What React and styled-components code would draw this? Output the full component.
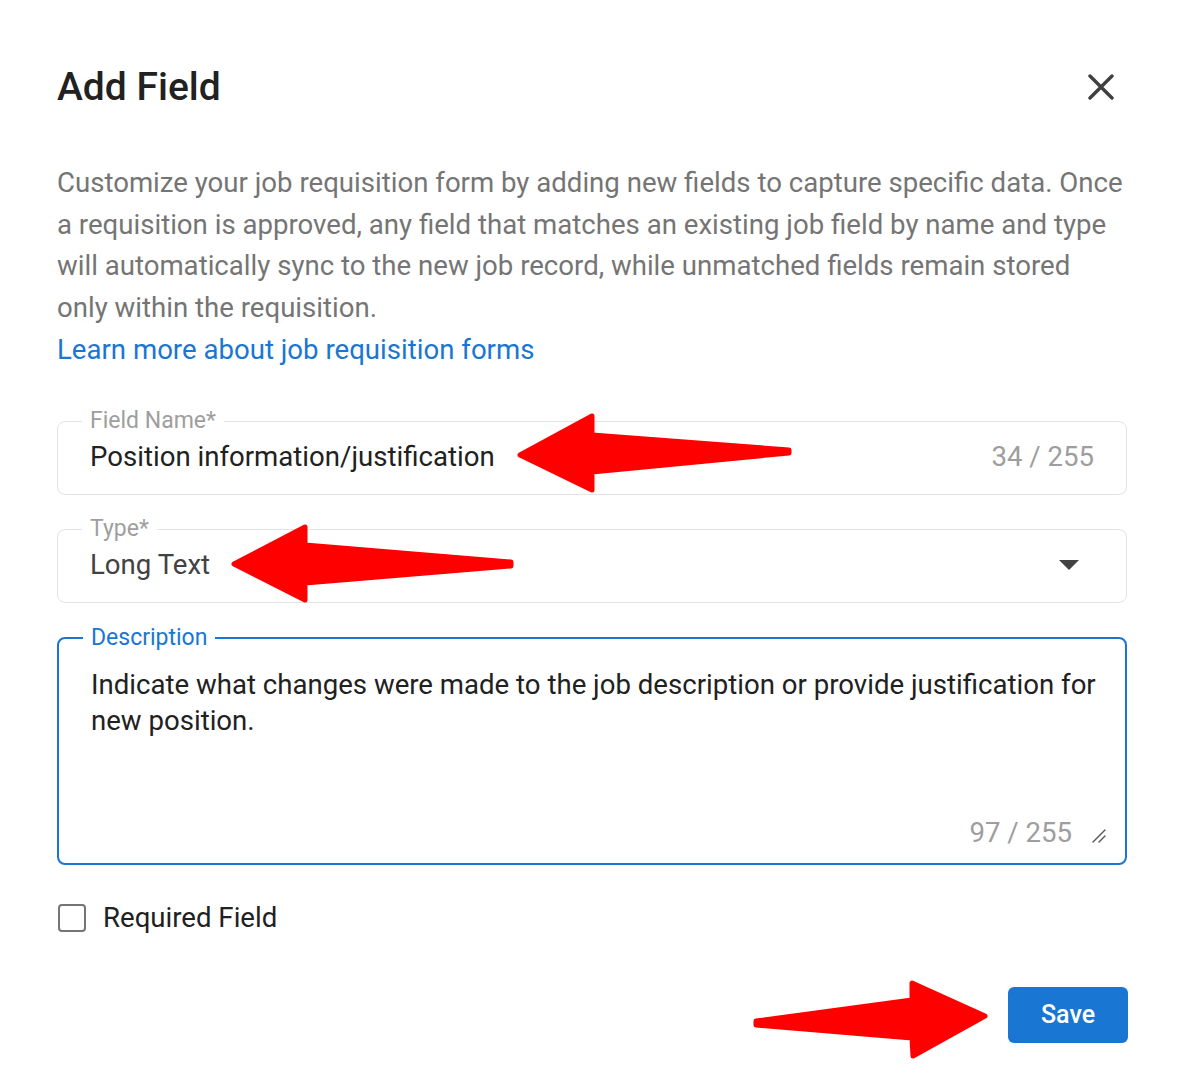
import React from 'react';
import styled, { createGlobalStyle } from 'styled-components';

function App() {
  return (
    <>
      <GlobalStyle />
      <Dialog>
        <Header>
          <Title>Add Field</Title>
          <CloseButton aria-label="Close">
            <svg width="26" height="26" viewBox="0 0 26 26">
              <path d="M2 2 L24 24 M24 2 L2 24" stroke="#3f3f3f" strokeWidth="3.4" strokeLinecap="round" />
            </svg>
          </CloseButton>
        </Header>

        <Intro>
          Customize your job requisition form by adding new fields to capture specific data. Once
          a requisition is approved, any field that matches an existing job field by name and type
          will automatically sync to the new job record, while unmatched fields remain stored
          only within the requisition.
          <IntroLink href="#">Learn more about job requisition forms</IntroLink>
        </Intro>

        <Form>
          <Outlined height={74}>
            <Label>Field Name*</Label>
            <Value>Position information/justification</Value>
            <Counter>34 / 255</Counter>
          </Outlined>

          <Outlined height={74}>
            <Label>Type*</Label>
            <Value muted>Long Text</Value>
            <Caret />
          </Outlined>

          <Outlined height={228} focused>
            <Label focused>Description</Label>
            <AreaText>
              Indicate what changes were made to the job description or provide justification for
              new position.
            </AreaText>
            <AreaFooter>
              <Counter>97 / 255</Counter>
              <svg width="14" height="14" viewBox="0 0 14 14">
                <path d="M1 13 L13 1 M7 13 L13 7" stroke="#555" strokeWidth="1.4" strokeLinecap="round" />
              </svg>
            </AreaFooter>
          </Outlined>
        </Form>

        <CheckRow>
          <Box />
          Required Field
        </CheckRow>

        <Footer>
          <SaveButton>Save</SaveButton>
        </Footer>
      </Dialog>

      {/* callout arrows */}
      <Callouts width="1186" height="1080" viewBox="0 0 1186 1080">
        <g fill="#ff0000" stroke="#ff0000" strokeWidth="5" strokeLinejoin="round">
          <polygon points="520,455 592,416 592,435 789,450 789,453 592,472 592,490" />
          <polygon points="234,564 305,527 305,545 511,562 511,566 305,583 305,600" />
          <polygon points="985,1016 912,983 912,1000 756,1021 756,1025 912,1038 913,1056" />
        </g>
      </Callouts>
    </>
  );
}

const GlobalStyle = createGlobalStyle`
  html, body {
    margin: 0;
    padding: 0;
    background: #ffffff;
  }
  body {
    font-family: Roboto, "Liberation Sans", sans-serif;
    color: #212121;
  }
`;

const Dialog = styled.div`
  width: 1186px;
  height: 1080px;
  box-sizing: border-box;
  padding: 65px 59px 0 57px;
  display: flex;
  flex-direction: column;
`;

const Header = styled.div`
  display: flex;
  align-items: center;
  justify-content: space-between;
  height: 44px;
`;

const Title = styled.h1`
  margin: 0;
  font-size: 39px;
  line-height: 44px;
  font-weight: 500;
  color: #212121;
`;

const CloseButton = styled.button`
  border: none;
  background: none;
  padding: 0;
  margin-right: 13px;
  display: flex;
  cursor: pointer;
`;

const Intro = styled.p`
  margin: 53px 0 0;
  font-size: 27.6px;
  line-height: 41.7px;
  color: #757575;
`;

const IntroLink = styled.a`
  display: block;
  color: #1976d2;
  text-decoration: none;
`;

const Form = styled.div`
  margin-top: 50px;
  display: flex;
  flex-direction: column;
  gap: 34px;
`;

const Outlined = styled.div`
  position: relative;
  height: ${(p) => p.height}px;
  box-sizing: border-box;
  border: ${(p) => (p.focused ? '2px solid #1976d2' : '1.5px solid #e3e3e3')};
  border-radius: 8px;
  display: flex;
  align-items: ${(p) => (p.focused ? 'stretch' : 'center')};
  flex-direction: ${(p) => (p.focused ? 'column' : 'row')};
  padding: ${(p) => (p.focused ? '28px 19px 12px 32px' : '0 32px 2px 32px')};
`;

const Label = styled.span`
  position: absolute;
  top: -16px;
  left: 24px;
  padding: 0 8px;
  background: #ffffff;
  font-size: 23px;
  line-height: 30px;
  color: ${(p) => (p.focused ? '#1976d2' : '#9e9e9e')};
`;

const Value = styled.span`
  flex: 1;
  font-size: 27.6px;
  line-height: 36px;
  color: ${(p) => (p.muted ? '#424242' : '#212121')};
`;

const Counter = styled.span`
  font-size: 27.6px;
  line-height: 36px;
  color: #9e9e9e;
`;

const Caret = styled.span`
  width: 0;
  height: 0;
  margin-right: 15px;
  border-left: 10px solid transparent;
  border-right: 10px solid transparent;
  border-top: 10px solid #424242;
`;

const AreaText = styled.div`
  flex: 1;
  font-size: 27.6px;
  line-height: 36px;
  color: #212121;
`;

const AreaFooter = styled.div`
  display: flex;
  align-items: center;
  justify-content: flex-end;
  gap: 20px;

  svg {
    margin-top: 6px;
  }
`;

const CheckRow = styled.label`
  margin-top: 35px;
  display: flex;
  align-items: center;
  gap: 17px;
  font-size: 27.6px;
  line-height: 36px;
  color: #212121;
`;

const Box = styled.span`
  width: 28px;
  height: 28px;
  box-sizing: border-box;
  margin-left: 1px;
  border: 2.5px solid #757575;
  border-radius: 4px;
`;

const Footer = styled.div`
  margin-top: 51px;
  display: flex;
  justify-content: flex-end;
`;

const SaveButton = styled.button`
  width: 120px;
  height: 56px;
  margin-right: -1px;
  border: none;
  border-radius: 6px;
  background: #1976d2;
  color: #ffffff;
  font-family: Roboto, "Liberation Sans", sans-serif;
  font-size: 25px;
  font-weight: 500;
  cursor: pointer;
`;

const Callouts = styled.svg`
  position: absolute;
  top: 0;
  left: 0;
  pointer-events: none;
`;

export default App;
